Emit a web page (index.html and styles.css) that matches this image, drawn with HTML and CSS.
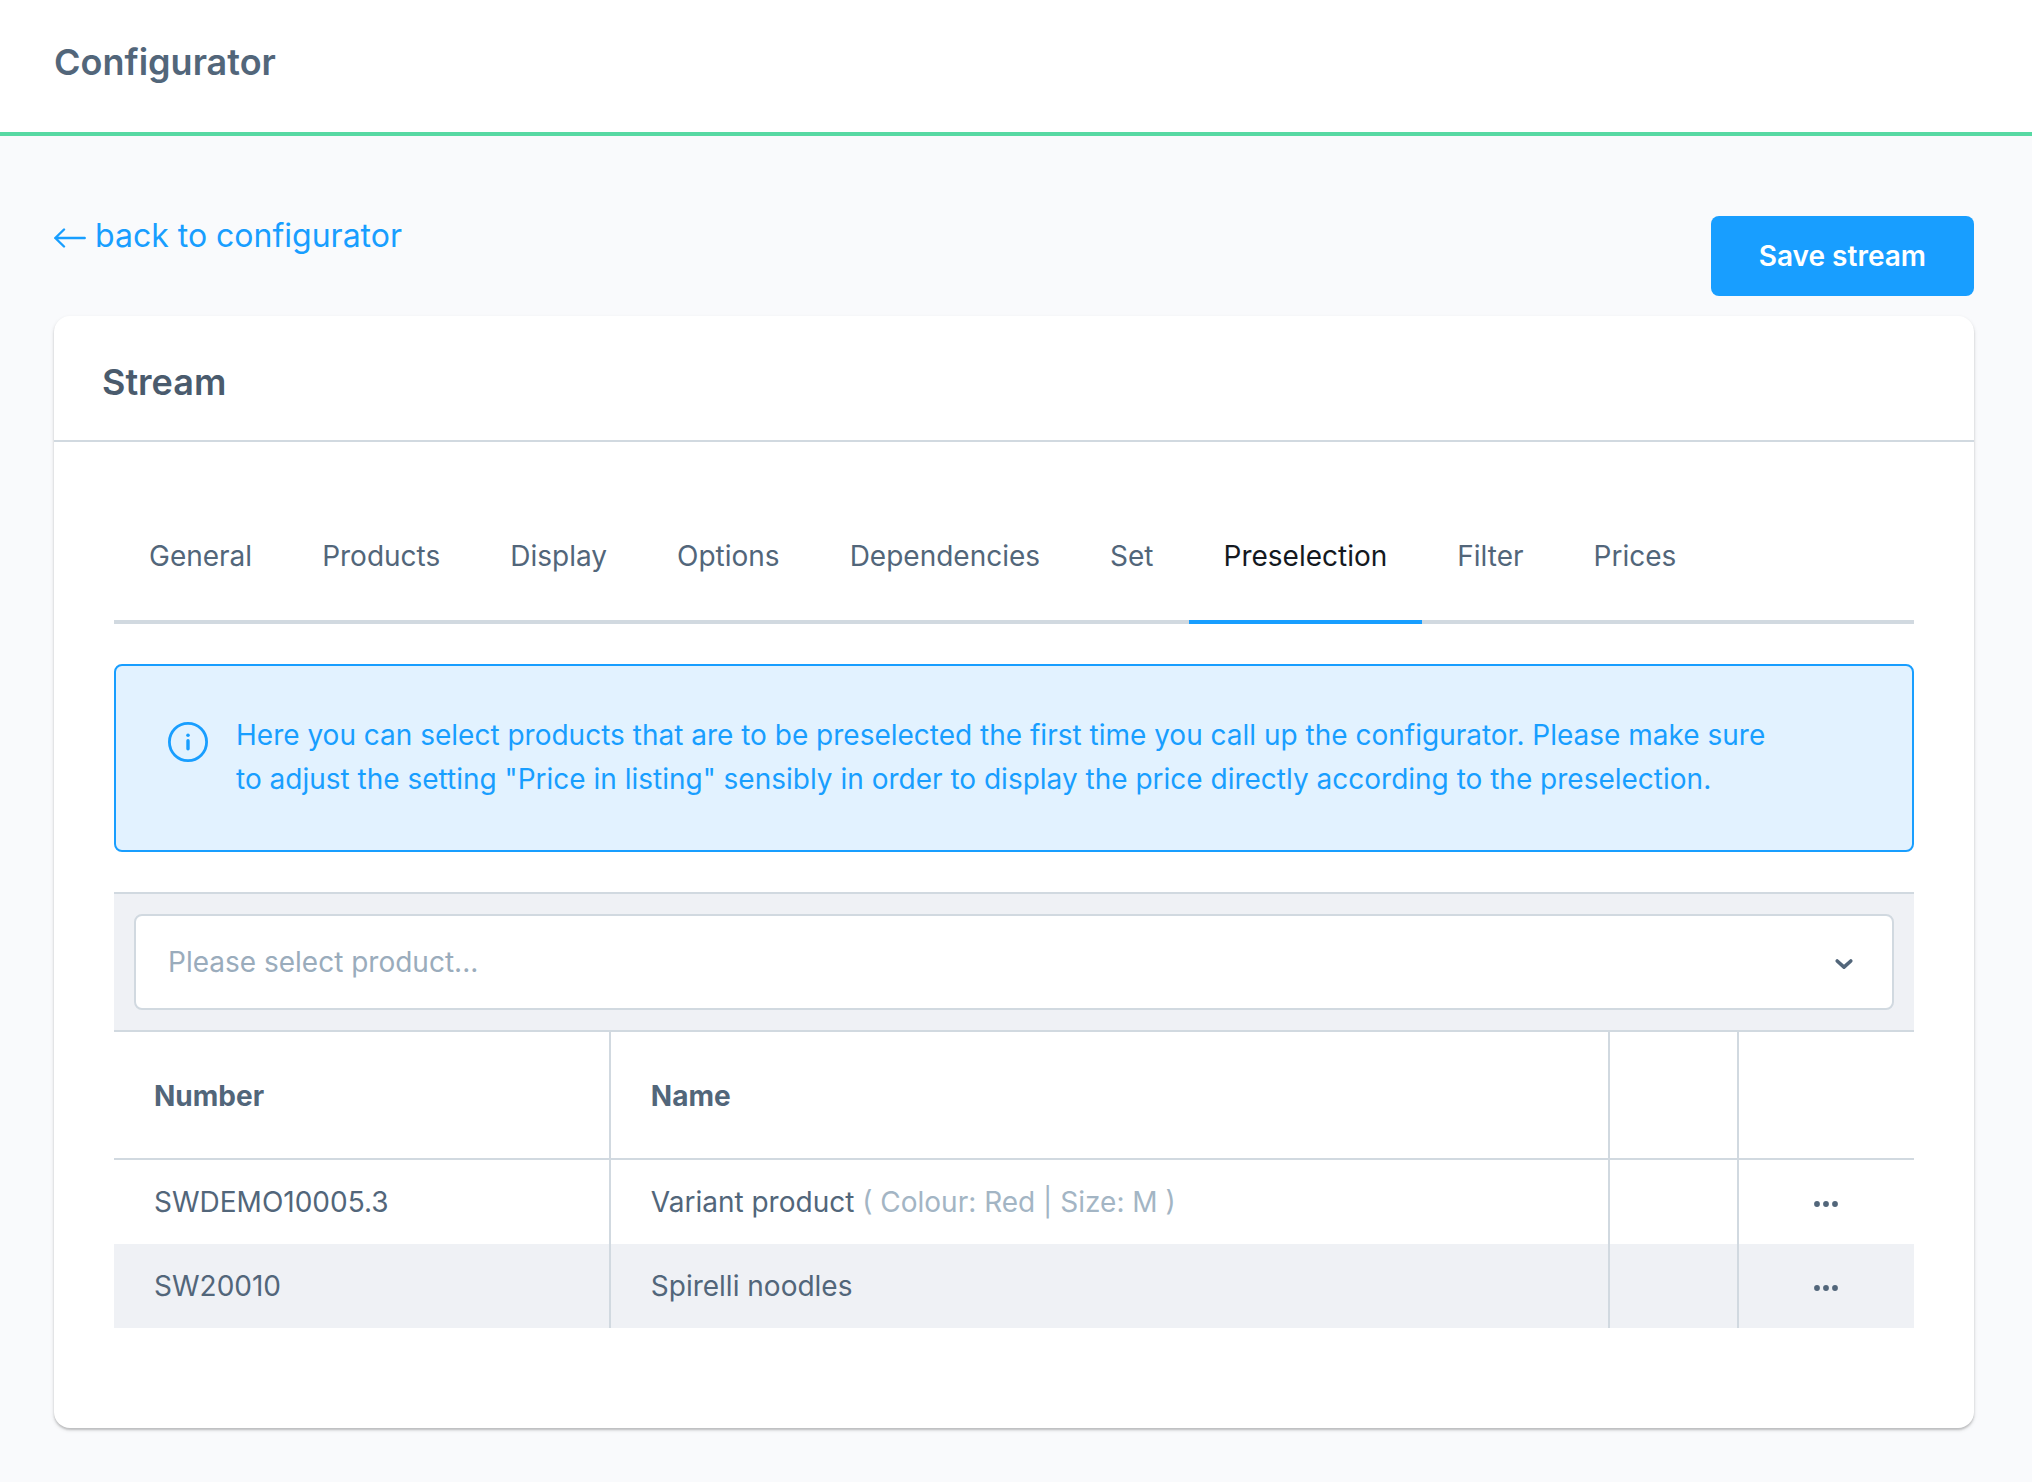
FILE: index.html
```html
<!DOCTYPE html>
<html lang="en">
<head>
<meta charset="utf-8">
<meta name="viewport" content="width=device-width, initial-scale=1">
<title>Configurator</title>
<link rel="stylesheet" href="styles.css">
</head>
<body>
<header class="topbar">
  <h1 class="topbar-title">Configurator</h1>
</header>
<main class="page">
  <div class="toolbar">
    <a class="back-link" href="#">
      <svg class="back-icon" viewBox="0 0 32 24" aria-hidden="true"><path d="M10 5.5 1.3 14l8.7 8.5M1.3 14h29.4"/></svg>
      <span>back to configurator</span>
    </a>
    <button class="button-primary" type="button">Save stream</button>
  </div>
  <section class="card">
    <h2 class="card-title">Stream</h2>
    <div class="card-body">
      <nav class="tabs">
        <a class="tab" href="#">General</a>
        <a class="tab" href="#">Products</a>
        <a class="tab" href="#">Display</a>
        <a class="tab" href="#">Options</a>
        <a class="tab" href="#">Dependencies</a>
        <a class="tab" href="#">Set</a>
        <a class="tab tab-active" href="#" aria-current="page">Preselection</a>
        <a class="tab" href="#">Filter</a>
        <a class="tab" href="#">Prices</a>
      </nav>
      <div class="alert">
        <svg class="alert-icon" viewBox="0 0 40 40" aria-hidden="true"><circle class="ring" cx="20" cy="20" r="18.6"/><circle cx="20" cy="13.2" r="1.8"/><rect x="18.3" y="17" width="3.4" height="11.4" rx="1.7"/></svg>
        <p class="alert-text">Here you can select products that are to be preselected the first time you call up the configurator. Please make sure to adjust the setting "Price in listing" sensibly in order to display the price directly according to the preselection.</p>
      </div>
      <div class="picker">
        <select class="picker-select" aria-label="Product">
          <option>Please select product...</option>
        </select>
        <svg class="picker-icon" viewBox="0 0 20 16" aria-hidden="true"><path d="m3.2 7 6.8 6.2L16.800 7"/></svg>
      </div>
      <table class="grid">
        <colgroup><col class="col-number"><col><col class="col-extra"><col class="col-actions"></colgroup>
        <thead>
          <tr><th scope="col">Number</th><th scope="col">Name</th><td></td><td></td></tr>
        </thead>
        <tbody>
          <tr>
            <td>SWDEMO10005.3</td>
            <td>Variant product <span class="variant">( Colour: Red | Size: M )</span></td>
            <td></td>
            <td class="actions"><button class="more" type="button" aria-label="Actions for Variant product"><svg class="more-icon" viewBox="0 0 26 12" aria-hidden="true"><circle cx="3" cy="8" r="2.9"/><circle cx="12" cy="8" r="2.9"/><circle cx="21" cy="8" r="2.9"/></svg></button></td>
          </tr>
          <tr>
            <td>SW20010</td>
            <td>Spirelli noodles</td>
            <td></td>
            <td class="actions"><button class="more" type="button" aria-label="Actions for Spirelli noodles"><svg class="more-icon" viewBox="0 0 26 12" aria-hidden="true"><circle cx="3" cy="8" r="2.9"/><circle cx="12" cy="8" r="2.9"/><circle cx="21" cy="8" r="2.9"/></svg></button></td>
          </tr>
        </tbody>
      </table>
    </div>
  </section>
</main>
</body>
</html>
```

FILE: styles.css
```css
:root {
  --text: #52667a;
  --muted: #9aacbc;
  --line: #d1d9e0;
  --blue: #189eff;
  --soft: #eff1f5;
}

* {
  box-sizing: border-box;
}

body {
  margin: 0;
  background: #f9fafc;
  color: var(--text);
  font: 28px/44px Inter, "Liberation Sans", sans-serif;
  font-optical-sizing: none;
}

.topbar {
  padding: 40px 54px 48px;
  background: #fff;
  border-bottom: 4px solid #57d9a3;
}

.topbar-title,
.card-title {
  margin: 0;
  font-size: 36px;
  font-weight: 600;
  line-height: 44px;
}

.page {
  padding: 80px 58px 54px 54px;
}

.toolbar {
  display: flex;
  justify-content: space-between;
  align-items: flex-start;
  padding-bottom: 20px;
}

.back-link {
  display: flex;
  align-items: center;
  gap: 9px;
  color: var(--blue);
  font-size: 32px;
  line-height: 40px;
  text-decoration: none;
}

.back-icon {
  width: 32px;
  height: 24px;
  fill: none;
  stroke: currentColor;
  stroke-width: 2.4;
  stroke-linecap: round;
  stroke-linejoin: round;
}

.button-primary {
  padding: 18px 48px;
  border: 0;
  border-radius: 8px;
  background: var(--blue);
  color: #fff;
  font: inherit;
  font-weight: 600;
}

.card {
  background: #fff;
  border-radius: 16px;
  box-shadow: 0 2px 2px rgba(0, 0, 0, .16), 0 2px 4px rgba(0, 0, 0, .12);
}

.card-title {
  padding: 44px 48px 36px;
  border-bottom: 2px solid var(--line);
  color: #4a5b6d;
}

.card-body {
  padding: 72px 60px 100px;
}

.tabs {
  display: flex;
  border-bottom: 4px solid var(--line);
}

.tab {
  margin-bottom: -4px;
  padding: 20px 35px 42px;
  border-bottom: 4px solid transparent;
  color: var(--text);
  text-decoration: none;
}

.tab-active {
  border-color: var(--blue);
  color: #14191f;
}

.alert {
  display: flex;
  gap: 28px;
  margin: 40px 0;
  padding: 47px 120px 49px 52px;
  border: 2px solid var(--blue);
  border-radius: 8px;
  background: #e2f2ff;
  color: var(--blue);
}

.alert-icon {
  flex: none;
  width: 40px;
  height: 40px;
  margin-top: 9px;
  fill: currentColor;
}

.alert-icon .ring {
  fill: none;
  stroke: currentColor;
  stroke-width: 2.8;
}

.alert-text {
  margin: 0;
}

.picker {
  display: grid;
  align-items: center;
  padding: 20px;
  border: solid var(--line);
  border-width: 2px 0;
  background: var(--soft);
}

.picker-select {
  grid-area: 1 / 1;
  width: 100%;
  height: 96px;
  padding: 0 32px;
  border: 2px solid var(--line);
  border-radius: 8px;
  background: #fff;
  color: var(--muted);
  font: inherit;
  appearance: none;
}

.picker-icon {
  grid-area: 1 / 1;
  justify-self: end;
  width: 20px;
  height: 16px;
  margin-right: 40px;
  fill: none;
  stroke: var(--text);
  stroke-width: 3.6;
  stroke-linecap: round;
  stroke-linejoin: round;
  pointer-events: none;
}

.grid {
  width: 100%;
  table-layout: fixed;
  border-collapse: separate;
  border-spacing: 0;
}

.col-number {
  width: 27.6%;
}

.col-extra {
  width: 129px;
}

.col-actions {
  width: 175px;
}

.grid th,
.grid td {
  padding: 20px 40px;
  border-right: 2px solid var(--line);
  text-align: left;
}

.grid th {
  padding: 42px 40px 40px;
  font-weight: 700;
}

.grid thead th,
.grid thead td {
  border-bottom: 2px solid var(--line);
}

.grid tr > :last-child {
  border-right: 0;
}

.grid tbody tr:nth-child(even) {
  background: var(--soft);
}

.variant {
  color: #a3b5c4;
}

.grid .actions {
  text-align: center;
}

.more {
  display: inline-flex;
  align-items: center;
  height: 44px;
  padding: 0;
  border: 0;
  background: none;
  vertical-align: top;
}

.more-icon {
  width: 26px;
  height: 12px;
  fill: var(--text);
}
```
